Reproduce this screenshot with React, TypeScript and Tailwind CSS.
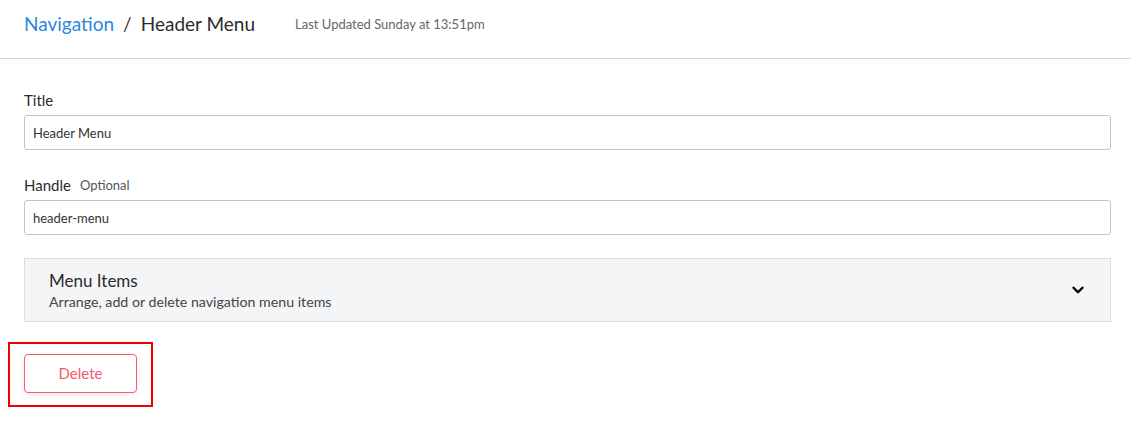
import { ChevronDown } from 'lucide-react';

export default function App() {
  return (
    <div className="min-h-screen w-full bg-white font-['Lato','Liberation_Sans',sans-serif] text-[#333]">
      <div className="flex h-[59px] items-center border-b border-[#d6d6d6] pl-6 pb-[10px]">
        <a className="text-[19px] text-[#2e86de]">Navigation</a>
        <span className="mx-[9px] text-[19px] text-[#333]">/</span>
        <h1 className="text-[19px] text-[#2b2b2b]">Header Menu</h1>
        <span className="ml-[40px] mt-[2px] text-[13px] text-[#666]">Last Updated Sunday at 13:51pm</span>
      </div>

      <div className="pl-6 pr-5 pt-[32px]">
        <label className="block text-[15px] leading-[18px] text-[#2b2b2b]">Title</label>
        <input
          readOnly
          value="Header Menu"
          className="mt-[6px] block h-[35px] w-full rounded-[3px] border border-[#c4c4c4] px-2 text-[13px] text-[#333] outline-none"
        />

        <div className="mt-[26px] flex h-[18px] items-end leading-[18px]">
          <label className="text-[15px] text-[#2b2b2b]">Handle</label>
          <span className="ml-[9px] text-[13px] text-[#555]">Optional</span>
        </div>
        <input
          readOnly
          value="header-menu"
          className="mt-[6px] block h-[35px] w-full rounded-[3px] border border-[#c4c4c4] px-2 text-[13px] text-[#333] outline-none"
        />

        <div className="mt-[23px] flex h-[64px] items-center justify-between border border-[#dedede] bg-[#f4f5f7] pl-6 pr-[23px]">
          <div>
            <div className="text-[17px] leading-[21px] text-[#2b2b2b]">Menu Items</div>
            <div className="mt-[2px] text-[14.2px] leading-[17px] text-[#444]">Arrange, add or delete navigation menu items</div>
          </div>
          <ChevronDown size={18} strokeWidth={3.2} className="text-black" />
        </div>
      </div>

      <div className="ml-2 mt-[20px] w-[145px] border-2 border-[#ee0000] pl-[14px] pt-[10px] pb-[12px]">
        <button className="h-[39px] w-[113px] rounded-[4px] border border-[#ff5a6a] bg-white text-[15px] text-[#f7576a] shadow-[0_2px_6px_rgba(0,0,0,0.08)]">
          Delete
        </button>
      </div>
    </div>
  );
}
